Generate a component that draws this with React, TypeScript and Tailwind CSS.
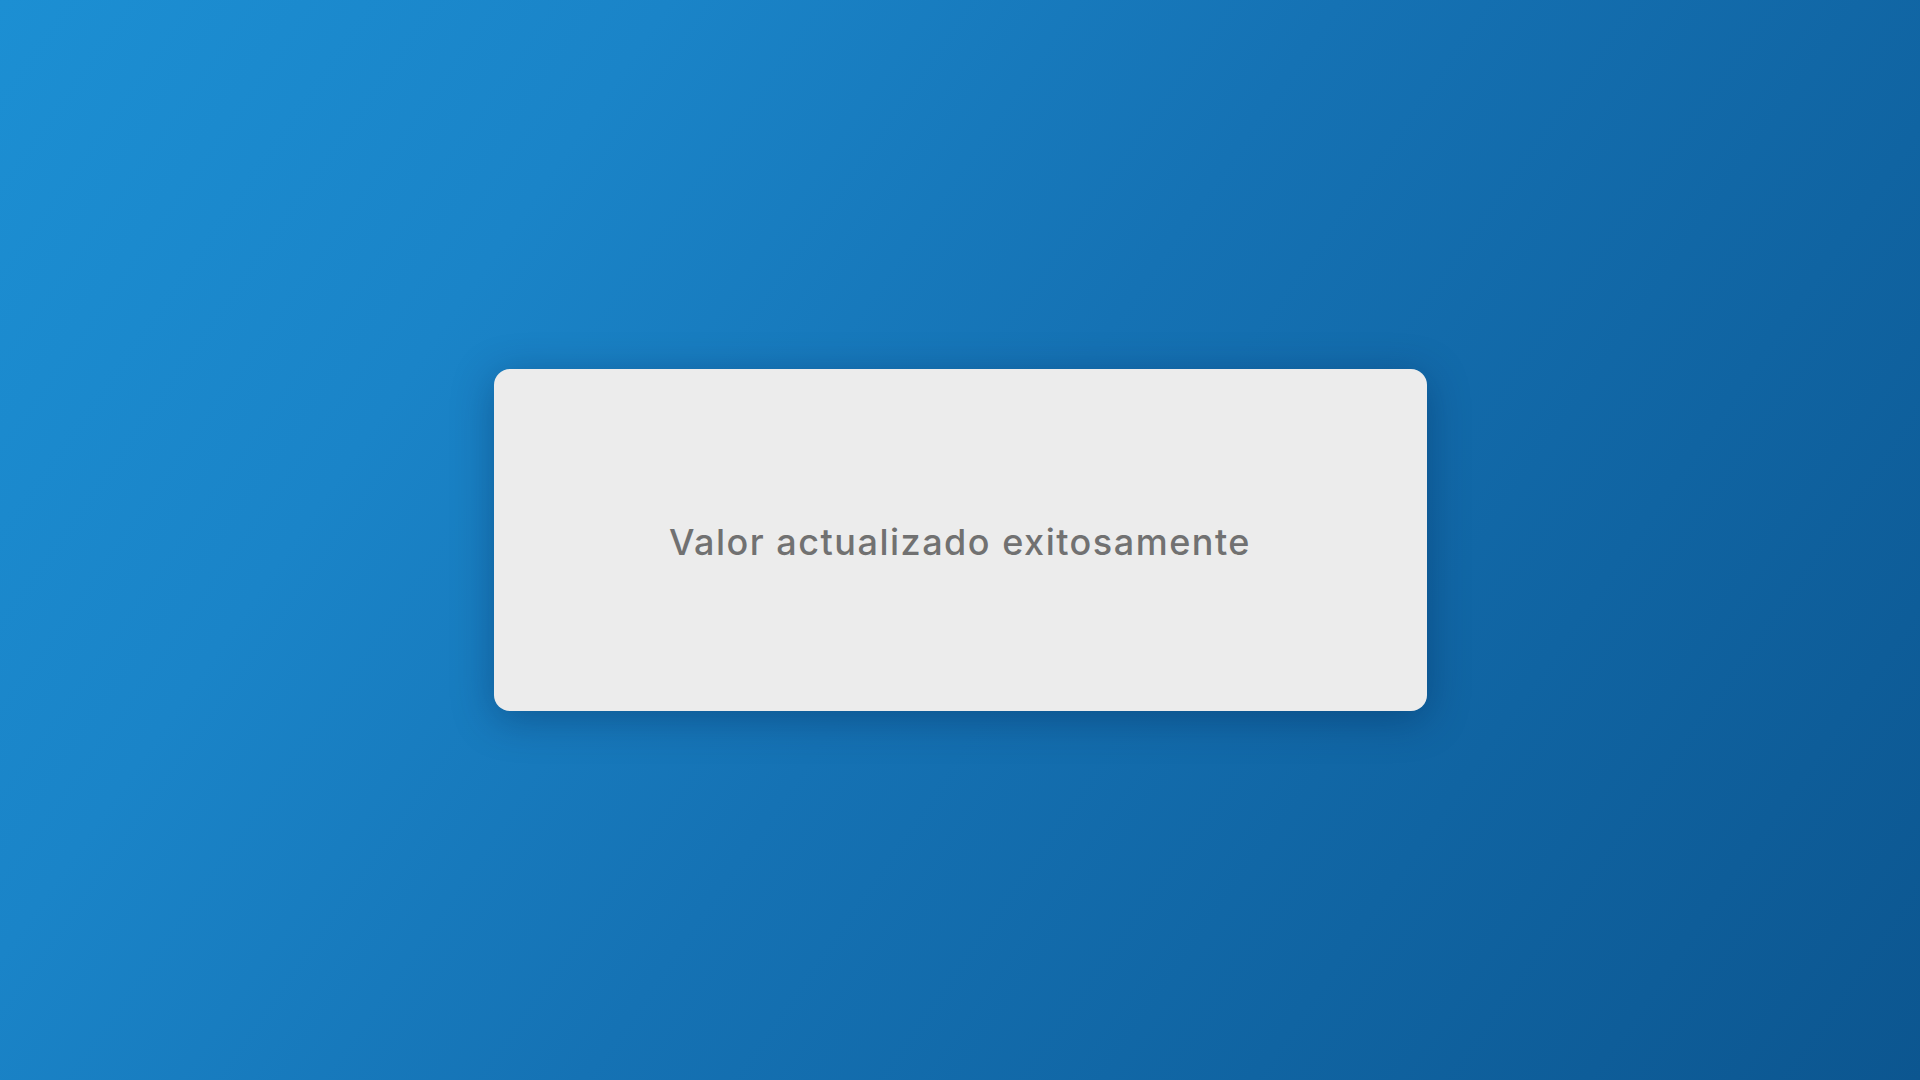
export default function App() {
  return (
    <div className="min-h-screen w-full flex items-center justify-center bg-[linear-gradient(125deg,#1c8fd3_0%,#1a84c8_25%,#1572b4_50%,#1064a2_75%,#0c5690_100%)]">
      <div className="w-[933px] h-[342px] rounded-2xl bg-[#ececec] shadow-[0_8px_40px_rgba(0,30,70,0.35)] flex items-center justify-center">
        <p className="text-[36px] font-medium text-[#717171] font-['Inter','Noto_Sans',sans-serif] tracking-[1.5px] pt-1">
          Valor actualizado exitosamente
        </p>
      </div>
    </div>
  );
}
